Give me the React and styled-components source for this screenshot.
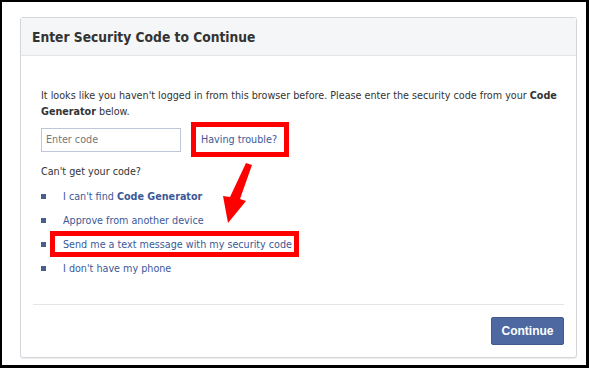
import React from "react";
import styled, { createGlobalStyle } from "styled-components";

const Global = createGlobalStyle`
  body {
    margin: 0;
    background: #fff;
  }
`;

const options = [
  { id: 1, text: "I can't find ", bold: "Code Generator" },
  { id: 2, text: "Approve from another device" },
  { id: 3, text: "Send me a text message with my security code", marked: true },
  { id: 4, text: "I don't have my phone" },
];

export default function App() {
  return (
    <Frame>
      <Global />
      <Card>
        <Header>Enter Security Code to Continue</Header>
        <Body>
          <Intro>
            It looks like you haven't logged in from this browser before. Please enter the security
            code from your <b>Code</b> <b>Generator</b> below.
          </Intro>
          <CodeRow>
            <CodeInput placeholder="Enter code" />
            <Marked $h="35px" $pl="10px" $pr="12px">
              <Link>Having trouble?</Link>
            </Marked>
          </CodeRow>
          <Label>Can't get your code?</Label>
          <List>
            {options.map((o) => (
              <Item key={o.id}>
                <Bullet />
                {o.marked ? (
                  <Marked $h="26px" $pl="13px" $pr="7px" $shift="-13px">
                    <Link>{o.text}</Link>
                  </Marked>
                ) : (
                  <Link>
                    {o.text}
                    {o.bold && <b>{o.bold}</b>}
                  </Link>
                )}
              </Item>
            ))}
          </List>
          <Arrow viewBox="0 0 30 62" width="30" height="62">
            <polygon points="23,0 29,2 17,36 23,38 5,60 0,33 7,34" fill="#f00" />
          </Arrow>
        </Body>
        <Footer>
          <Button>Continue</Button>
        </Footer>
      </Card>
    </Frame>
  );
}

const Frame = styled.div`
  width: 589px;
  height: 368px;
  box-sizing: border-box;
  border: 2px solid #000;
  border-right-width: 3px;
  border-bottom-width: 3px;
  padding: 15px 9px 0 18px;
  font-family: "DejaVu Sans Condensed", sans-serif;
`;

const Card = styled.div`
  border: 1px solid #d3d6db;
  border-radius: 3px;
  box-shadow: 0 1px 1px rgba(0, 0, 0, 0.08);
  background: #fff;
  height: 341px;
  box-sizing: border-box;
  display: flex;
  flex-direction: column;
`;

const Header = styled.div`
  height: 37px;
  background: #f5f6f7;
  border-bottom: 1px solid #e5e5e5;
  display: flex;
  align-items: center;
  padding-left: 11px;
  font-weight: bold;
  font-size: 13.7px;
  color: #333;
`;

const Body = styled.div`
  position: relative;
  flex: 1;
  padding: 32px 12px 0 20px;
  font-size: 10.7px;
  color: #333;
`;

const Intro = styled.p`
  margin: 0;
  line-height: 16px;
`;

const CodeRow = styled.div`
  display: flex;
  align-items: center;
  gap: 10px;
  margin-top: 2px;
`;

const CodeInput = styled.input`
  width: 140px;
  height: 24px;
  box-sizing: border-box;
  border: 1px solid #bdc7d8;
  padding: 0 4px;
  font-family: "DejaVu Sans Condensed", sans-serif;
  font-size: 10.7px;
  &::placeholder {
    color: #777;
  }
`;

const Marked = styled.span`
  display: inline-flex;
  align-items: center;
  box-sizing: border-box;
  height: ${(p) => p.$h};
  padding: 0 ${(p) => p.$pr} 0 ${(p) => p.$pl};
  margin-left: ${(p) => p.$shift || 0};
  outline: 5px solid #f00;
  outline-offset: -5px;
`;

const Link = styled.span`
  color: #3b5998;
  b {
    color: #3b5998;
  }
`;

const Label = styled.div`
  margin-top: 8px;
  line-height: 14px;
`;

const List = styled.ul`
  list-style: none;
  margin: 5px 0 0;
  padding: 0;
  display: flex;
  flex-direction: column;
`;

const Item = styled.li`
  display: flex;
  align-items: center;
  height: 24px;
`;

const Bullet = styled.span`
  width: 5px;
  height: 5px;
  background: #4a5f8f;
  margin-right: 17px;
  flex: none;
`;

const Arrow = styled.svg`
  position: absolute;
  left: 202px;
  top: 107px;
`;

const Footer = styled.div`
  margin: 0 12px;
  border-top: 1px solid #e5e5e5;
  padding: 12px 0;
  display: flex;
  justify-content: flex-end;
`;

const Button = styled.button`
  width: 73px;
  height: 28px;
  background: #4e69a2;
  border: 1px solid #435a8b;
  border-radius: 2px;
  color: #fff;
  font-family: "Liberation Sans", Arial, sans-serif;
  font-weight: bold;
  font-size: 12px;
`;
